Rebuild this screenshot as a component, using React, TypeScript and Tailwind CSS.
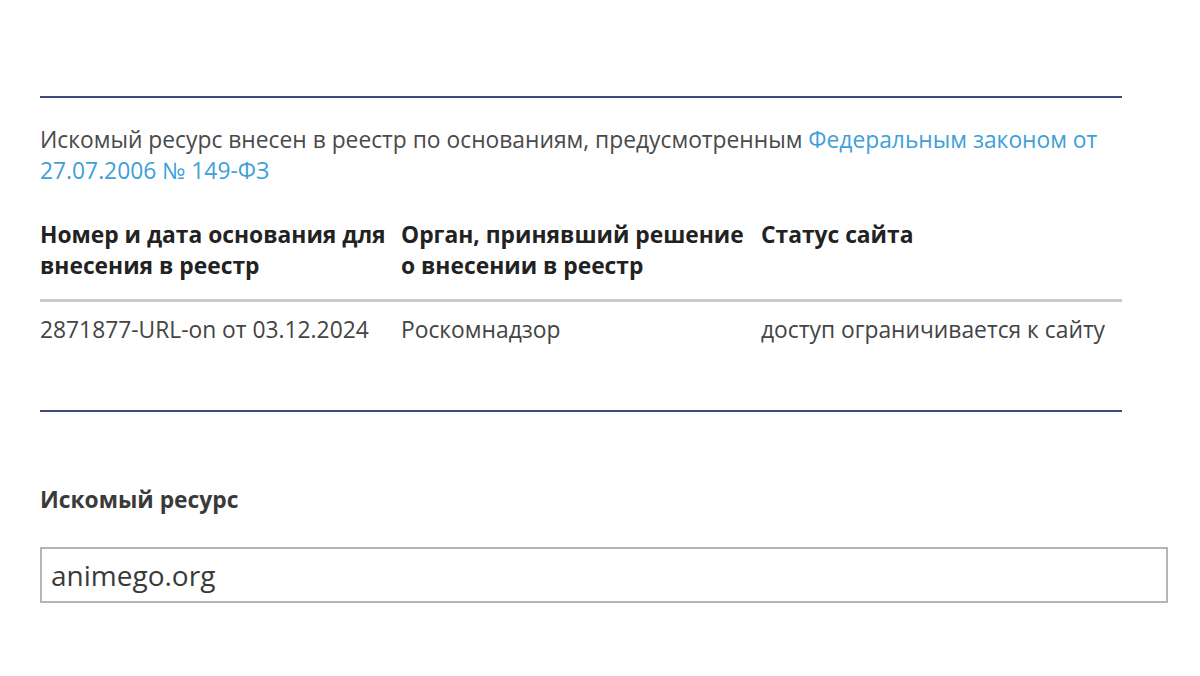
import React from "react";

export default function App() {
  return (
    <div
      className="w-[1200px] h-[676px] bg-white overflow-hidden pl-[40px] pt-[96px]"
      style={{ fontFamily: '"Open Sans", "Noto Sans", sans-serif' }}
    >
      <div className="w-[1082px] border-t-2 border-[#3c4a7c]" />
      <p className="w-[1082px] mt-[26px] text-[22.8px] leading-[31px] text-[#4a4a4a]">
        Искомый ресурс внесен в реестр по основаниям, предусмотренным{" "}
        <span className="text-[#3f9fd8]">Федеральным законом от 27.07.2006 № 149-ФЗ</span>
      </p>
      <div className="w-[1082px] mt-[33px]">
        <div className="grid grid-cols-[361px_360px_361px] text-[22.8px] leading-[31px] font-bold text-[#222] pb-[18px] border-b-[3px] border-[#c9c9c9]">
          <div>Номер и дата основания для внесения в реестр</div>
          <div>Орган, принявший решение о внесении в реестр</div>
          <div>Статус сайта</div>
        </div>
        <div className="grid grid-cols-[361px_360px_361px] text-[22.8px] leading-[31px] text-[#444] pt-[12px]">
          <div>2871877-URL-on от 03.12.2024</div>
          <div>Роскомнадзор</div>
          <div>доступ ограничивается к сайту</div>
        </div>
      </div>
      <div className="w-[1082px] mt-[65px] border-t-2 border-[#3c4a7c]" />
      <div className="mt-[72px] text-[22.8px] leading-[31px] font-bold text-[#3a3a3a]">
        Искомый ресурс
      </div>
      <div className="mt-[32px] w-[1128px] h-[56px] border-2 border-[#b4b4b4] flex items-center pl-[9px] text-[28px] text-[#3a3a3a]">
        animego.org
      </div>
    </div>
  );
}
